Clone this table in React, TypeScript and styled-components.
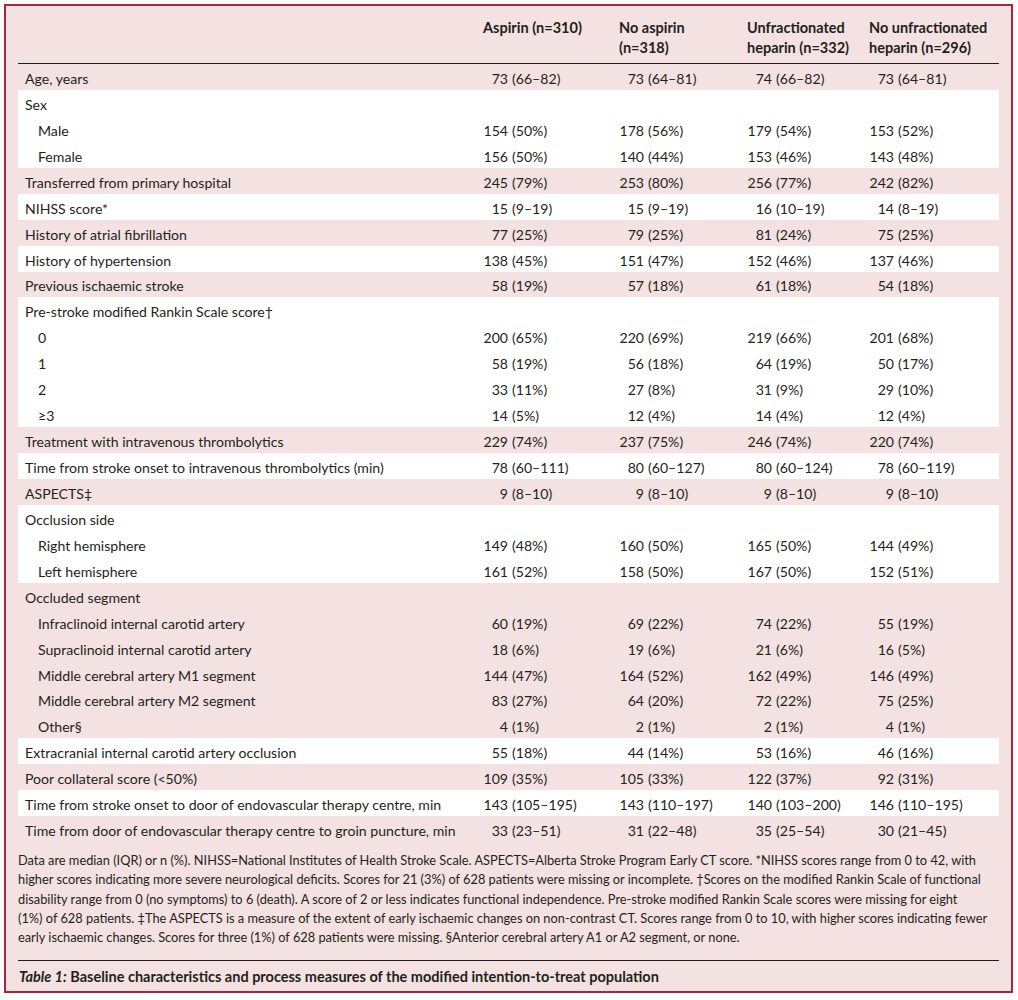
import React from "react";
import styled, { createGlobalStyle } from "styled-components";

const Global = createGlobalStyle`
  html, body { margin: 0; padding: 0; background: #ffffff; }
  body { font-family: "Lato", "Liberation Sans", sans-serif; color: #231f20; }
`;

const Frame = styled.div`
  margin: 4px 0 0 4px;
  width: 1009px;
  height: 989px;
  box-sizing: border-box;
  border: 2px solid #a8253b;
  background: #f3e2e1;
  padding: 0 12px;
  display: flex;
  flex-direction: column;
`;

const Grid = `
  display: grid;
  grid-template-columns: 465px 136px 128px 122px 130px;
`;

const Head = styled.div`
  ${Grid}
  padding: 12px 0 5px;
  border-bottom: 1.5px solid #231f20;
  font-weight: 700;
  font-size: 14.5px;
  line-height: 20px;
`;

const HeadCell = styled.div`
  white-space: nowrap;
`;

const Group = styled.div<{ $white: boolean }>`
  background: ${(p) => (p.$white ? "#ffffff" : "transparent")};
`;

const Row = styled.div`
  ${Grid}
  box-sizing: border-box;
  height: 25.95px;
  padding-top: 3px;
  align-items: center;
  font-size: 14.1px;
`;

const Label = styled.div<{ $indent: boolean }>`
  padding-left: ${(p) => (p.$indent ? 20 : 7)}px;
  white-space: nowrap;
`;

const Value = styled.div`
  display: flex;
  white-space: nowrap;
`;

const Num = styled.span`
  width: 25px;
  text-align: right;
  margin-right: 4px;
`;

const Notes = styled.div`
  margin-top: 9px;
  font-size: 12.8px;
  line-height: 19.3px;
  padding-bottom: 12px;
  border-bottom: 1.5px solid #231f20;
`;

const NoteLine = styled.span`
  display: block;
  white-space: nowrap;
`;

const Caption = styled.div`
  padding-left: 1px;
  margin-top: 6px;
  font-size: 14.5px;
  font-weight: 700;
  line-height: 20px;
`;

const Em = styled.em`
  font-style: italic;
`;

type R = { label: string; indent?: boolean; v?: string[] };
type G = { white: boolean; rows: R[] };

const groups: G[] = [
  { white: false, rows: [{ label: "Age, years", v: ["73 (66–82)", "73 (64–81)", "74 (66–82)", "73 (64–81)"] }] },
  {
    white: true,
    rows: [
      { label: "Sex" },
      { label: "Male", indent: true, v: ["154 (50%)", "178 (56%)", "179 (54%)", "153 (52%)"] },
      { label: "Female", indent: true, v: ["156 (50%)", "140 (44%)", "153 (46%)", "143 (48%)"] },
    ],
  },
  { white: false, rows: [{ label: "Transferred from primary hospital", v: ["245 (79%)", "253 (80%)", "256 (77%)", "242 (82%)"] }] },
  { white: true, rows: [{ label: "NIHSS score*", v: ["15 (9–19)", "15 (9–19)", "16 (10–19)", "14 (8–19)"] }] },
  { white: false, rows: [{ label: "History of atrial fibrillation", v: ["77 (25%)", "79 (25%)", "81 (24%)", "75 (25%)"] }] },
  { white: true, rows: [{ label: "History of hypertension", v: ["138 (45%)", "151 (47%)", "152 (46%)", "137 (46%)"] }] },
  { white: false, rows: [{ label: "Previous ischaemic stroke", v: ["58 (19%)", "57 (18%)", "61 (18%)", "54 (18%)"] }] },
  {
    white: true,
    rows: [
      { label: "Pre-stroke modified Rankin Scale score†" },
      { label: "0", indent: true, v: ["200 (65%)", "220 (69%)", "219 (66%)", "201 (68%)"] },
      { label: "1", indent: true, v: ["58 (19%)", "56 (18%)", "64 (19%)", "50 (17%)"] },
      { label: "2", indent: true, v: ["33 (11%)", "27 (8%)", "31 (9%)", "29 (10%)"] },
      { label: "≥3", indent: true, v: ["14 (5%)", "12 (4%)", "14 (4%)", "12 (4%)"] },
    ],
  },
  { white: false, rows: [{ label: "Treatment with intravenous thrombolytics", v: ["229 (74%)", "237 (75%)", "246 (74%)", "220 (74%)"] }] },
  { white: true, rows: [{ label: "Time from stroke onset to intravenous thrombolytics (min)", v: ["78 (60–111)", "80 (60–127)", "80 (60–124)", "78 (60–119)"] }] },
  { white: false, rows: [{ label: "ASPECTS‡", v: ["9 (8–10)", "9 (8–10)", "9 (8–10)", "9 (8–10)"] }] },
  {
    white: true,
    rows: [
      { label: "Occlusion side" },
      { label: "Right hemisphere", indent: true, v: ["149 (48%)", "160 (50%)", "165 (50%)", "144 (49%)"] },
      { label: "Left hemisphere", indent: true, v: ["161 (52%)", "158 (50%)", "167 (50%)", "152 (51%)"] },
    ],
  },
  {
    white: false,
    rows: [
      { label: "Occluded segment" },
      { label: "Infraclinoid internal carotid artery", indent: true, v: ["60 (19%)", "69 (22%)", "74 (22%)", "55 (19%)"] },
      { label: "Supraclinoid internal carotid artery", indent: true, v: ["18 (6%)", "19 (6%)", "21 (6%)", "16 (5%)"] },
      { label: "Middle cerebral artery M1 segment", indent: true, v: ["144 (47%)", "164 (52%)", "162 (49%)", "146 (49%)"] },
      { label: "Middle cerebral artery M2 segment", indent: true, v: ["83 (27%)", "64 (20%)", "72 (22%)", "75 (25%)"] },
      { label: "Other§", indent: true, v: ["4 (1%)", "2 (1%)", "2 (1%)", "4 (1%)"] },
    ],
  },
  { white: true, rows: [{ label: "Extracranial internal carotid artery occlusion", v: ["55 (18%)", "44 (14%)", "53 (16%)", "46 (16%)"] }] },
  { white: false, rows: [{ label: "Poor collateral score (<50%)", v: ["109 (35%)", "105 (33%)", "122 (37%)", "92 (31%)"] }] },
  { white: true, rows: [{ label: "Time from stroke onset to door of endovascular therapy centre, min", v: ["143 (105–195)", "143 (110–197)", "140 (103–200)", "146 (110–195)"] }] },
  { white: false, rows: [{ label: "Time from door of endovascular therapy centre to groin puncture, min", v: ["33 (23–51)", "31 (22–48)", "35 (25–54)", "30 (21–45)"] }] },
];

const notes = [
  "Data are median (IQR) or n (%). NIHSS=National Institutes of Health Stroke Scale. ASPECTS=Alberta Stroke Program Early CT score. *NIHSS scores range from 0 to 42, with",
  "higher scores indicating more severe neurological deficits. Scores for 21 (3%) of 628 patients were missing or incomplete. †Scores on the modified Rankin Scale of functional",
  "disability range from 0 (no symptoms) to 6 (death). A score of 2 or less indicates functional independence. Pre-stroke modified Rankin Scale scores were missing for eight",
  "(1%) of 628 patients. ‡The ASPECTS is a measure of the extent of early ischaemic changes on non-contrast CT. Scores range from 0 to 10, with higher scores indicating fewer",
  "early ischaemic changes. Scores for three (1%) of 628 patients were missing. §Anterior cerebral artery A1 or A2 segment, or none.",
];

function Cell({ text }: { text: string }) {
  const i = text.indexOf(" ");
  return (
    <Value>
      <Num>{text.slice(0, i)}</Num>
      <span>{text.slice(i + 1)}</span>
    </Value>
  );
}

export default function App() {
  return (
    <>
      <Global />
      <Frame>
        <Head>
          <HeadCell />
          <HeadCell>Aspirin (n=310)</HeadCell>
          <HeadCell>
            No aspirin
            <br />
            (n=318)
          </HeadCell>
          <HeadCell>
            Unfractionated
            <br />
            heparin (n=332)
          </HeadCell>
          <HeadCell>
            No unfractionated
            <br />
            heparin (n=296)
          </HeadCell>
        </Head>
        {groups.map((g, gi) => (
          <Group key={gi} $white={g.white}>
            {g.rows.map((r, ri) => (
              <Row key={ri}>
                <Label $indent={!!r.indent}>{r.label}</Label>
                {r.v ? r.v.map((t, ti) => <Cell key={ti} text={t} />) : null}
              </Row>
            ))}
          </Group>
        ))}
        <Notes>
          {notes.map((n, i) => (
            <NoteLine key={i}>{n}</NoteLine>
          ))}
        </Notes>
        <Caption>
          <Em>Table 1:</Em> Baseline characteristics and process measures of the modified intention-to-treat population
        </Caption>
      </Frame>
    </>
  );
}
